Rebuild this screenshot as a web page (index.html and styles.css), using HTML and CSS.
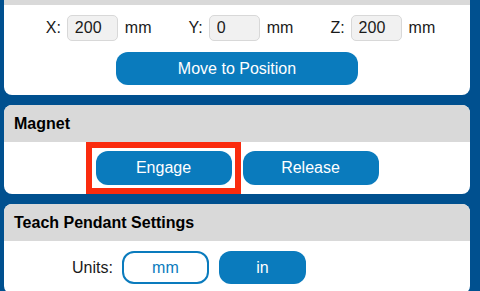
FILE: index.html
```html
<!DOCTYPE html>
<html>
<head>
    <title>Teach Pendant</title>
    <link rel="stylesheet" href="styles.css">
</head>
<body>
    <div class="panel-list">
        <div class="panel">
            <!-- заголовок карточки прокручен за верх экрана -->
            <div class="panel-header scrolled-off"></div>
            <div class="panel-body">
                <div class="coord-row">
                    <label class="coord">X: <input type="text" value="200"> mm</label>
                    <label class="coord">Y: <input type="text" value="0"> mm</label>
                    <label class="coord">Z: <input type="text" value="200"> mm</label>
                </div>
                <div class="center-row">
                    <button class="btn btn-wide">Move to Position</button>
                </div>
            </div>
        </div>

        <div class="panel">
            <div class="panel-header">Magnet</div>
            <div class="panel-body magnet-body">
                <div class="highlight">
                    <button class="btn">Engage</button>
                </div>
                <button class="btn">Release</button>
            </div>
        </div>

        <div class="panel">
            <div class="panel-header">Teach Pendant Settings</div>
            <div class="panel-body">
                <div class="setting-row">
                    <span class="setting-label">Units:</span>
                    <button class="btn btn-toggle">mm</button>
                    <button class="btn btn-toggle active">in</button>
                </div>
            </div>
        </div>
    </div>
</body>
</html>
```

FILE: styles.css
```css
body {
    margin: 0;
    padding: 0 10px 0 4px;
    background: #00508f;
    font-family: "Liberation Sans", Arial, sans-serif;
    font-size: 16px;
    color: #1a1a1a;
    overflow: hidden;
}

.panel {
    background: white;
    border-radius: 8px;
    overflow: hidden;
    margin-bottom: 10px;
}

.panel:first-child {
    border-radius: 0 0 8px 8px;
}

.panel-header {
    background: #d9d9d9;
    padding: 10px;
    line-height: 17px;
    font-weight: bold;
    color: #000;
}

.panel-header.scrolled-off {
    height: 5px;
    padding: 0;
}

.panel-body {
    padding: 10px;
}

.coord-row {
    display: flex;
    justify-content: center;
    gap: 37px;
    padding-left: 7px;
    margin-bottom: 11px;
}

.coord {
    display: flex;
    align-items: center;
    gap: 6px;
}

.coord input {
    width: 51px;
    height: 26px;
    box-sizing: border-box;
    border: 1px solid #d8d8d8;
    border-radius: 5px;
    background: #f1f1f1;
    padding: 0 7px;
    font-family: inherit;
    font-size: 16px;
    color: #1a1a1a;
    margin-right: 1px;
}

.center-row {
    display: flex;
    justify-content: center;
}

.btn {
    width: 136px;
    height: 34px;
    border: none;
    border-radius: 12px;
    background: #0a7bbd;
    color: white;
    font-family: inherit;
    font-size: 16px;
    cursor: pointer;
}

.btn-wide {
    width: 242px;
    height: 33px;
}

.magnet-body {
    display: flex;
    justify-content: center;
    gap: 11px;
    padding: 9px 10px;
}

.highlight {
    position: relative;
    display: flex;
}

/* красная рамка-выделение */
.highlight::after {
    content: "";
    position: absolute;
    top: -9px;
    bottom: -9px;
    left: -10px;
    right: -9px;
    border: 6px solid #fa2b0e;
}

.setting-row {
    display: flex;
    align-items: center;
    padding-left: 58px;
}

.setting-label {
    margin-right: 9px;
}

.btn-toggle {
    width: 87px;
    height: 33px;
    margin-right: 10px;
}

.btn-toggle:not(.active) {
    background: white;
    border: 2px solid #0a7bbd;
    color: #0a7bbd;
}
```
